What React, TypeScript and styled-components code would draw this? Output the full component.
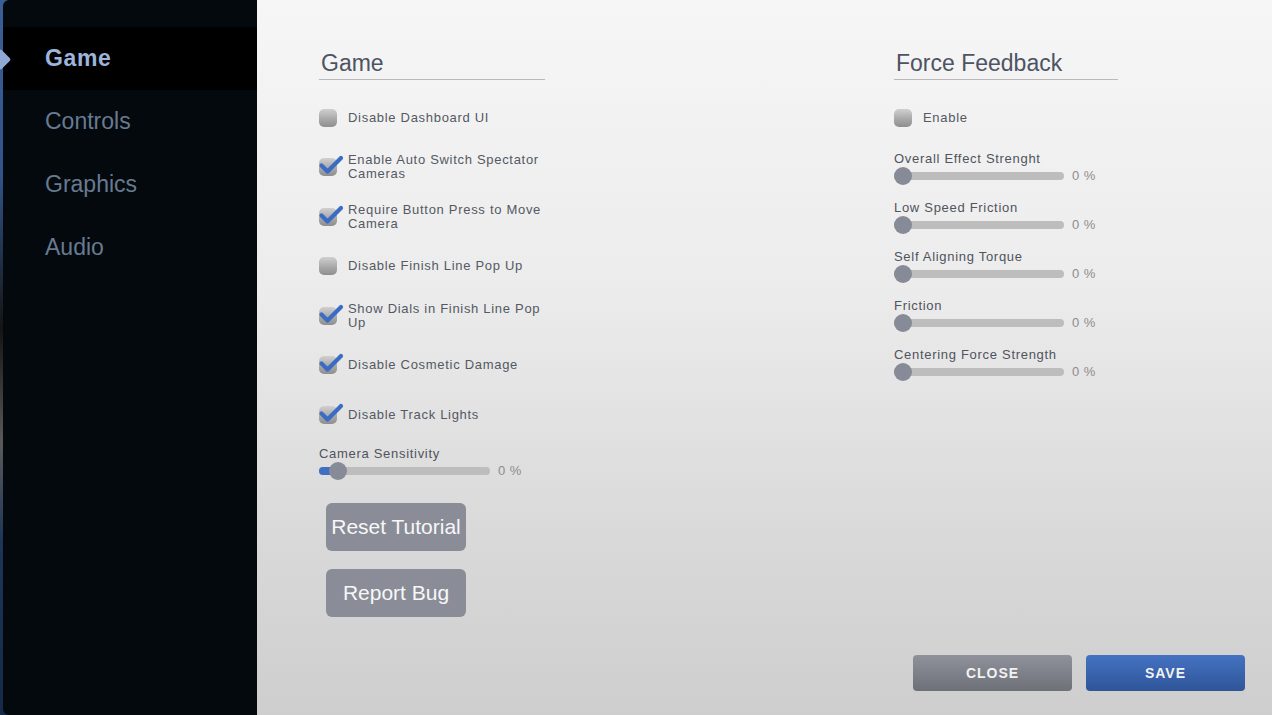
import { useState } from 'react';
import styled, { createGlobalStyle } from 'styled-components';

const GlobalStyle = createGlobalStyle`
  html, body {
    margin: 0;
    padding: 0;
    overflow: hidden;
  }
  body {
    font-family: 'Liberation Sans', Arial, sans-serif;
  }
  * {
    box-sizing: border-box;
  }
`;

const Screen = styled.div`
  display: flex;
  width: 1272px;
  height: 715px;
  padding-left: 3px;
  background: linear-gradient(180deg, #3a5f96 0%, #31558a 24%, #141414 46%, #5a5a5a 62%, #1d3557 76%, #162a47 100%);
`;

const Sidebar = styled.nav`
  width: 254px;
  flex-shrink: 0;
  background: #03090c;
  border-radius: 6px 0 0 6px;
  padding-top: 27px;
  display: flex;
  flex-direction: column;
`;

const NavItem = styled.div<{ $active?: boolean }>`
  position: relative;
  height: 63px;
  display: flex;
  align-items: center;
  padding-left: 42px;
  font-size: 23px;
  font-weight: ${({ $active }) => ($active ? 700 : 400)};
  letter-spacing: ${({ $active }) => ($active ? '0.6px' : '0')};
  color: ${({ $active }) => ($active ? '#9db4dc' : '#687a92')};
  background: ${({ $active }) => ($active ? '#000000' : 'transparent')};
  cursor: pointer;
`;

const Marker = styled.span`
  position: absolute;
  left: -10px;
  top: 50%;
  width: 15px;
  height: 15px;
  margin-top: -7px;
  border-radius: 2px;
  background: #8fa9d4;
  transform: rotate(45deg);
`;

const Main = styled.main`
  flex: 1;
  display: flex;
  flex-direction: column;
  background: linear-gradient(180deg, #f6f6f6 0%, #ececec 40%, #d9d9d9 75%, #cecece 100%);
  padding: 50px 27px 24px 62px;
`;

const Columns = styled.div`
  display: grid;
  grid-template-columns: 575px 230px;
  align-items: start;
`;

const Column = styled.section`
  display: flex;
  flex-direction: column;
`;

const Heading = styled.h2<{ $width: number }>`
  margin: 0 0 13px;
  width: ${({ $width }) => $width}px;
  padding: 0 0 3px 2px;
  font-size: 23px;
  line-height: 26px;
  font-weight: 400;
  color: #4d5363;
  border-bottom: 1px solid #b9b9b9;
`;

const CheckRow = styled.label`
  height: 49.5px;
  display: flex;
  align-items: center;
  gap: 11px;
  cursor: pointer;
`;

const Box = styled.span`
  position: relative;
  width: 18px;
  height: 18px;
  flex-shrink: 0;
  border-radius: 5px;
  background: linear-gradient(180deg, #d0d0d0 0%, #a9a9a9 55%, #8e8e8e 100%);
`;

const Tick = styled.svg`
  position: absolute;
  left: 0;
  top: -3px;
  overflow: visible;
`;

const Label = styled.span`
  max-width: 200px;
  font-size: 13px;
  line-height: 14px;
  letter-spacing: 0.7px;
  color: #545963;
`;

const SliderGroup = styled.div<{ $gap: number }>`
  display: flex;
  flex-direction: column;
  margin-top: ${({ $gap }) => $gap}px;
`;

const SliderLabel = styled.span`
  font-size: 13px;
  line-height: 16px;
  letter-spacing: 0.7px;
  color: #4f545d;
`;

const SliderRow = styled.div`
  height: 18px;
  display: flex;
  align-items: center;
  gap: 8px;
`;

const Track = styled.div<{ $width: number }>`
  position: relative;
  width: ${({ $width }) => $width}px;
  height: 8px;
  border-radius: 4px;
  background: #bdbdbd;
`;

const Fill = styled.div`
  position: absolute;
  left: 0;
  top: 0;
  bottom: 0;
  border-radius: 4px;
  background: #3f6fc2;
`;

const Thumb = styled.div`
  position: absolute;
  top: 50%;
  width: 18px;
  height: 18px;
  margin-top: -9px;
  border-radius: 50%;
  background: #878b98;
`;

const Value = styled.span`
  font-size: 13px;
  letter-spacing: 0.5px;
  color: #8c8c8c;
`;

const Actions = styled.div`
  display: flex;
  flex-direction: column;
  gap: 18px;
  margin: 23px 0 0 7px;
`;

const GreyButton = styled.button`
  width: 140px;
  height: 48px;
  border: none;
  border-radius: 6px;
  background: #8a8d98;
  color: #f7f7f7;
  font-family: 'Liberation Sans', Arial, sans-serif;
  font-size: 21px;
  padding: 0;
  cursor: pointer;
`;

const Footer = styled.div`
  margin-top: auto;
  display: flex;
  justify-content: flex-end;
  gap: 14px;
`;

const FooterButton = styled.button<{ $primary?: boolean }>`
  width: 159px;
  height: 36px;
  border: none;
  border-radius: 4px;
  background: ${({ $primary }) =>
    $primary
      ? 'linear-gradient(180deg, #4472c2 0%, #2f5599 100%)'
      : 'linear-gradient(180deg, #8f929b 0%, #6d7077 100%)'};
  color: #f2f2f2;
  font-family: 'Liberation Sans', Arial, sans-serif;
  font-size: 14px;
  font-weight: 700;
  letter-spacing: 1px;
  cursor: pointer;
`;

function Checkbox({ label, checked }: { label: string; checked: boolean }) {
  return (
    <CheckRow>
      <Box>
        {checked && (
          <Tick width="24" height="20" viewBox="0 0 24 20">
            <path
              d="M2.5 10.5 L8.5 16.5 L22 3"
              fill="none"
              stroke="#3b6cc4"
              strokeWidth="4.2"
              strokeLinecap="round"
              strokeLinejoin="round"
            />
          </Tick>
        )}
      </Box>
      <Label>{label}</Label>
    </CheckRow>
  );
}

function Slider({
  label,
  width,
  value,
  gap,
  thumbAt = 0,
}: {
  label: string;
  width: number;
  value: number;
  gap: number;
  thumbAt?: number;
}) {
  return (
    <SliderGroup $gap={gap}>
      <SliderLabel>{label}</SliderLabel>
      <SliderRow>
        <Track $width={width}>
          {thumbAt > 0 && <Fill style={{ width: thumbAt + 9 }} />}
          <Thumb style={{ left: thumbAt }} />
        </Track>
        <Value>{value} %</Value>
      </SliderRow>
    </SliderGroup>
  );
}

const gameOptions = [
  { label: 'Disable Dashboard UI', checked: false },
  { label: 'Enable Auto Switch Spectator Cameras', checked: true },
  { label: 'Require Button Press to Move Camera', checked: true },
  { label: 'Disable Finish Line Pop Up', checked: false },
  { label: 'Show Dials in Finish Line Pop Up', checked: true },
  { label: 'Disable Cosmetic Damage', checked: true },
  { label: 'Disable Track Lights', checked: true },
];

const forceSliders = [
  'Overall Effect Strenght',
  'Low Speed Friction',
  'Self Aligning Torque',
  'Friction',
  'Centering Force Strength',
];

const tabs = ['Game', 'Controls', 'Graphics', 'Audio'];

export default function App() {
  const [tab, setTab] = useState('Game');

  return (
    <>
      <GlobalStyle />
      <Screen>
        <Sidebar>
          {tabs.map((t) => (
            <NavItem key={t} $active={t === tab} onClick={() => setTab(t)}>
              {t === tab && <Marker />}
              {t}
            </NavItem>
          ))}
        </Sidebar>

        <Main>
          <Columns>
            <Column>
              <Heading $width={226}>Game</Heading>
              {gameOptions.map((o) => (
                <Checkbox key={o.label} label={o.label} checked={o.checked} />
              ))}
              <Slider label="Camera Sensitivity" width={171} value={0} gap={6} thumbAt={10} />
              <Actions>
                <GreyButton>Reset Tutorial</GreyButton>
                <GreyButton>Report Bug</GreyButton>
              </Actions>
            </Column>

            <Column>
              <Heading $width={224}>Force Feedback</Heading>
              <Checkbox label="Enable" checked={false} />
              {forceSliders.map((s, i) => (
                <Slider key={s} label={s} width={170} value={0} gap={i === 0 ? 8 : 15} />
              ))}
            </Column>
          </Columns>

          <Footer>
            <FooterButton>CLOSE</FooterButton>
            <FooterButton $primary>SAVE</FooterButton>
          </Footer>
        </Main>
      </Screen>
    </>
  );
}
